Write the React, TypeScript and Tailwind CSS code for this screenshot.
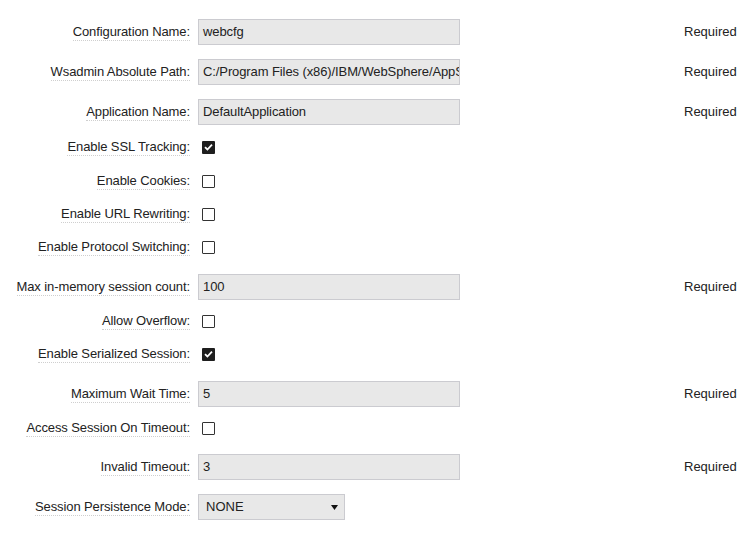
import React from "react";

type Row =
  | { kind: "text"; label: string; value: string; required?: boolean; mt: number }
  | { kind: "check"; label: string; checked: boolean; mt: number }
  | { kind: "select"; label: string; value: string; mt: number };

const rows: Row[] = [
  { kind: "text", label: "Configuration Name:", value: "webcfg", required: true, mt: 19 },
  { kind: "text", label: "Wsadmin Absolute Path:", value: "C:/Program Files (x86)/IBM/WebSphere/AppServer/bin/wsadmin.bat", required: true, mt: 14 },
  { kind: "text", label: "Application Name:", value: "DefaultApplication", required: true, mt: 14 },
  { kind: "check", label: "Enable SSL Tracking:", checked: true, mt: 9 },
  { kind: "check", label: "Enable Cookies:", checked: false, mt: 8 },
  { kind: "check", label: "Enable URL Rewriting:", checked: false, mt: 7 },
  { kind: "check", label: "Enable Protocol Switching:", checked: false, mt: 7 },
  { kind: "text", label: "Max in-memory session count:", value: "100", required: true, mt: 14 },
  { kind: "check", label: "Allow Overflow:", checked: false, mt: 8 },
  { kind: "check", label: "Enable Serialized Session:", checked: true, mt: 7 },
  { kind: "text", label: "Maximum Wait Time:", value: "5", required: true, mt: 14 },
  { kind: "check", label: "Access Session On Timeout:", checked: false, mt: 8 },
  { kind: "text", label: "Invalid Timeout:", value: "3", required: true, mt: 13 },
  { kind: "select", label: "Session Persistence Mode:", value: "NONE", mt: 14 },
];

function Check({ checked }: { checked: boolean }) {
  if (checked) {
    return (
      <span className="ml-[4px] flex h-[13px] w-[13px] items-center justify-center rounded-[1px] bg-[#1e1e1e]">
        <svg width="9" height="8" viewBox="0 0 9 8">
          <path d="M1 4.2 L3.4 6.5 L8 1.6" fill="none" stroke="#ffffff" strokeWidth="1.8" />
        </svg>
      </span>
    );
  }
  return <span className="ml-[4px] block h-[13px] w-[13px] rounded-[1px] border border-[#333333] bg-white" />;
}

export default function App() {
  return (
    <div
      className="h-[534px] w-[752px] overflow-hidden bg-white text-[13px] text-[#222222]"
      style={{ fontFamily: '"Liberation Sans", Arial, sans-serif' }}
    >
      <div className="flex flex-col">
        {rows.map((r, i) => (
          <div key={i} className="flex h-[26px] items-center" style={{ marginTop: r.mt }}>
            <div className="w-[190px] shrink-0 text-right tracking-[-0.1px]">
              <span className="border-b border-dotted border-[#cfcfcf] pb-[1px] leading-[15px]">{r.label}</span>
            </div>
            <div className="ml-[8px] flex w-[486px] shrink-0 items-center">
              {r.kind === "text" && (
                <div className="flex h-[26px] w-[262px] items-center overflow-hidden whitespace-nowrap border border-[#cbcbd0] bg-[#e8e8e8] pl-[4px] tracking-[-0.1px] text-[#222222]">
                  {r.value}
                </div>
              )}
              {r.kind === "check" && <Check checked={r.checked} />}
              {r.kind === "select" && (
                <div className="flex h-[26px] w-[147px] items-center justify-between border border-[#cbcbd0] bg-[#e8e8e8] pl-[7px] pr-[6px]">
                  <span>{r.value}</span>
                  <svg width="7" height="5" viewBox="0 0 7 5">
                    <path d="M0 0 L7 0 L3.5 5 Z" fill="#111111" />
                  </svg>
                </div>
              )}
            </div>
            {r.kind === "text" && r.required && <div className="whitespace-nowrap">Required</div>}
          </div>
        ))}
      </div>
    </div>
  );
}
